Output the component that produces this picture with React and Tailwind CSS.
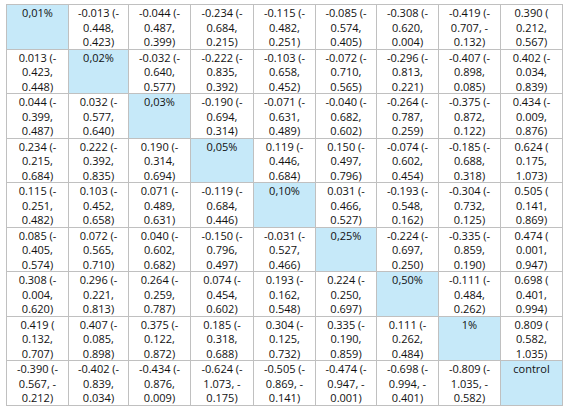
const rows = [
  ["0,01%", "-0.013 (-0.448, 0.423)", "-0.044 (-0.487, 0.399)", "-0.234 (-0.684, 0.215)", "-0.115 (-0.482, 0.251)", "-0.085 (-0.574, 0.405)", "-0.308 (-0.620, 0.004)", "-0.419 (-0.707, -0.132)", "0.390 (0.212, 0.567)"],
  ["0.013 (-0.423, 0.448)", "0,02%", "-0.032 (-0.640, 0.577)", "-0.222 (-0.835, 0.392)", "-0.103 (-0.658, 0.452)", "-0.072 (-0.710, 0.565)", "-0.296 (-0.813, 0.221)", "-0.407 (-0.898, 0.085)", "0.402 (-0.034, 0.839)"],
  ["0.044 (-0.399, 0.487)", "0.032 (-0.577, 0.640)", "0,03%", "-0.190 (-0.694, 0.314)", "-0.071 (-0.631, 0.489)", "-0.040 (-0.682, 0.602)", "-0.264 (-0.787, 0.259)", "-0.375 (-0.872, 0.122)", "0.434 (-0.009, 0.876)"],
  ["0.234 (-0.215, 0.684)", "0.222 (-0.392, 0.835)", "0.190 (-0.314, 0.694)", "0,05%", "0.119 (-0.446, 0.684)", "0.150 (-0.497, 0.796)", "-0.074 (-0.602, 0.454)", "-0.185 (-0.688, 0.318)", "0.624 (0.175, 1.073)"],
  ["0.115 (-0.251, 0.482)", "0.103 (-0.452, 0.658)", "0.071 (-0.489, 0.631)", "-0.119 (-0.684, 0.446)", "0,10%", "0.031 (-0.466, 0.527)", "-0.193 (-0.548, 0.162)", "-0.304 (-0.732, 0.125)", "0.505 (0.141, 0.869)"],
  ["0.085 (-0.405, 0.574)", "0.072 (-0.565, 0.710)", "0.040 (-0.602, 0.682)", "-0.150 (-0.796, 0.497)", "-0.031 (-0.527, 0.466)", "0,25%", "-0.224 (-0.697, 0.250)", "-0.335 (-0.859, 0.190)", "0.474 (0.001, 0.947)"],
  ["0.308 (-0.004, 0.620)", "0.296 (-0.221, 0.813)", "0.264 (-0.259, 0.787)", "0.074 (-0.454, 0.602)", "0.193 (-0.162, 0.548)", "0.224 (-0.250, 0.697)", "0,50%", "-0.111 (-0.484, 0.262)", "0.698 (0.401, 0.994)"],
  ["0.419 (0.132, 0.707)", "0.407 (-0.085, 0.898)", "0.375 (-0.122, 0.872)", "0.185 (-0.318, 0.688)", "0.304 (-0.125, 0.732)", "0.335 (-0.190, 0.859)", "0.111 (-0.262, 0.484)", "1%", "0.809 (0.582, 1.035)"],
  ["-0.390 (-0.567, -0.212)", "-0.402 (-0.839, 0.034)", "-0.434 (-0.876, 0.009)", "-0.624 (-1.073, -0.175)", "-0.505 (-0.869, -0.141)", "-0.474 (-0.947, -0.001)", "-0.698 (-0.994, -0.401)", "-0.809 (-1.035, -0.582)", "control"],
];

function toLines(s) {
  const m = s.match(/^(\S+) \((\S+), (\S+)\)$/);
  if (!m) return [s];
  const [, a, b, c] = m;
  const bNeg = b.startsWith("-");
  const cNeg = c.startsWith("-");
  return [
    a + " (" + (bNeg ? "-" : ""),
    (bNeg ? b.slice(1) : b) + "," + (cNeg ? " -" : ""),
    (cNeg ? c.slice(1) : c) + ")",
  ];
}

export default function App() {
  return (
    <div className="w-[564px] h-[415px] bg-white pt-[4px] pl-[6px]" style={{ fontFamily: '"Open Sans", "Liberation Sans", sans-serif' }}>
      <div className="grid w-max grid-cols-[61px_59px_61px_62px_61px_60px_61px_61px_61px] grid-rows-[repeat(9,43.5px)] gap-px bg-[#c0c0c0] p-px">
        {rows.map((row, ri) =>
          row.map((cell, ci) => {
            const diag = ri === ci;
            return (
              <div
                key={ri + "-" + ci}
                className={(diag ? "bg-[#c6e9f9] " : "bg-white ") + "pt-[1px] text-center text-[11px] leading-[14.5px] text-[#111] whitespace-nowrap"}
              >
                {toLines(cell).map((l, i) => (
                  <div key={i}>{l}</div>
                ))}
              </div>
            );
          })
        )}
      </div>
    </div>
  );
}
